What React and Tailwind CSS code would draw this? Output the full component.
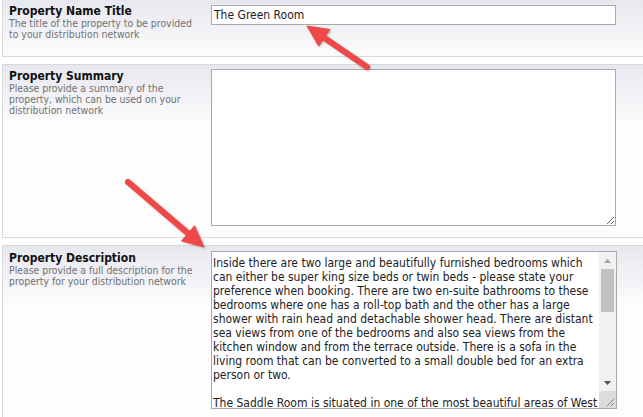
import React from "react";

const FONT = { fontFamily: 'Tahoma, "DejaVu Sans Condensed", "DejaVu Sans", sans-serif' };

const desc = `Inside there are two large and beautifully furnished bedrooms which
can either be super king size beds or twin beds - please state your
preference when booking. There are two en-suite bathrooms to these
bedrooms where one has a roll-top bath and the other has a large
shower with rain head and detachable shower head. There are distant
sea views from one of the bedrooms and also sea views from the
kitchen window and from the terrace outside. There is a sofa in the
living room that can be converted to a small double bed for an extra
person or two.

The Saddle Room is situated in one of the most beautiful areas of West
Cornwall.`;

function Label({ title, lines, pt }) {
  return (
    <div className={`w-[208px] shrink-0 pl-[6px] ${pt}`}>
      <div className="text-[12px] font-bold leading-[14px] text-[#111]">{title}</div>
      <div className="text-[10.4px] leading-[11px] text-[#707070]">
        {lines.map((l, i) => (
          <div key={i}>{l}</div>
        ))}
      </div>
    </div>
  );
}

function Arrow({ x1, y1, x2, y2 }) {
  const dx = x2 - x1;
  const dy = y2 - y1;
  const len = Math.sqrt(dx * dx + dy * dy);
  const ux = dx / len;
  const uy = dy / len;
  const hl = 21;
  const hw = 10;
  const bx = x2 - ux * hl;
  const by = y2 - uy * hl;
  const px = -uy;
  const py = ux;
  const pts = `${x2},${y2} ${bx + px * hw},${by + py * hw} ${bx - px * hw},${by - py * hw}`;
  return (
    <g>
      <line x1={x1} y1={y1} x2={bx + ux * 2} y2={by + uy * 2} stroke="#f04848" strokeWidth="6" strokeLinecap="round" />
      <polygon points={pts} fill="#f04848" stroke="#f04848" strokeWidth="1" strokeLinejoin="round" />
    </g>
  );
}

export default function App() {
  return (
    <div className="relative w-[643px] h-[417px] overflow-hidden bg-white pl-[2px]" style={FONT}>
      {/* Section 1 */}
      <div className="flex h-[57px] w-[700px] border border-t-0 border-[#d9d9d9] bg-[linear-gradient(#e7e7ef,#fbfbfc_52px)]">
        <Label
          title="Property Name Title"
          lines={["The title of the property to be provided", "to your distribution network"]}
          pt="pt-[4px]"
        />
        <div className="pt-[5px]">
          <input
            readOnly
            value="The Green Room"
            className="block w-[405px] h-[20px] border border-[#a9a9a9] bg-white px-[2px] text-[12px] text-[#222] outline-none"
            style={FONT}
          />
        </div>
      </div>

      {/* Section 2 */}
      <div className="mt-[7px] flex h-[174px] w-[700px] border border-[#d9d9d9] bg-[linear-gradient(#e7e7ef,#fdfdfe_60px)]">
        <Label
          title="Property Summary"
          lines={["Please provide a summary of the", "property, which can be used on your", "distribution network"]}
          pt="pt-[4px]"
        />
        <div className="pt-[4px]">
          <textarea
            readOnly
            className="block w-[405px] h-[157px] border border-[#a9a9a9] bg-white p-[2px] text-[12px] outline-none"
            style={FONT}
          />
        </div>
      </div>

      {/* Section 3 */}
      <div className="mt-[7px] flex h-[200px] w-[700px] border border-[#d9d9d9] bg-[linear-gradient(#e7e7ef,#fdfdfe_60px)]">
        <Label
          title="Property Description"
          lines={["Please provide a full description for the", "property for your distribution network"]}
          pt="pt-[5px]"
        />
        <div className="pt-[5px]">
          <div className="flex w-[406px] h-[158px] border border-[#a9a9a9] bg-white">
            <textarea
              readOnly
              wrap="off"
              value={desc}
              className="block w-[387px] h-full resize-none overflow-hidden bg-white pl-[1px] pt-[4px] text-[12px] leading-[14px] text-[#222] outline-none"
              style={FONT}
            />
            <div className="flex w-[17px] flex-col">
              <div className="flex flex-col bg-[#f1f1f1] h-[139px]">
                <div className="flex h-[17px] items-center justify-center">
                  <svg width="7" height="4" viewBox="0 0 7 4"><polygon points="3.5,0 7,4 0,4" fill="#a3a3a3" /></svg>
                </div>
                <div className="px-[2px]">
                  <div className="h-[43px] bg-[#c1c1c1]" />
                </div>
                <div className="flex-1" />
                <div className="flex h-[17px] items-center justify-center">
                  <svg width="7" height="4" viewBox="0 0 7 4"><polygon points="0,0 7,0 3.5,4" fill="#505050" /></svg>
                </div>
              </div>
              <div className="relative h-[17px] bg-[#dcdcdc]">
                <svg className="absolute right-[1px] bottom-[1px]" width="10" height="10" viewBox="0 0 10 10">
                  <line x1="9" y1="2" x2="2" y2="9" stroke="#8a8a8a" strokeWidth="1" />
                  <line x1="9" y1="6" x2="6" y2="9" stroke="#8a8a8a" strokeWidth="1" />
                </svg>
              </div>
            </div>
          </div>
        </div>
      </div>

      <svg className="pointer-events-none absolute left-0 top-0" width="643" height="417" style={{ filter: "drop-shadow(1px 1px 1px rgba(0,0,0,0.25))" }}>
        <Arrow x1={367} y1={67} x2={307} y2={26} />
        <Arrow x1={128} y1={182} x2={204} y2={247} />
      </svg>
    </div>
  );
}
